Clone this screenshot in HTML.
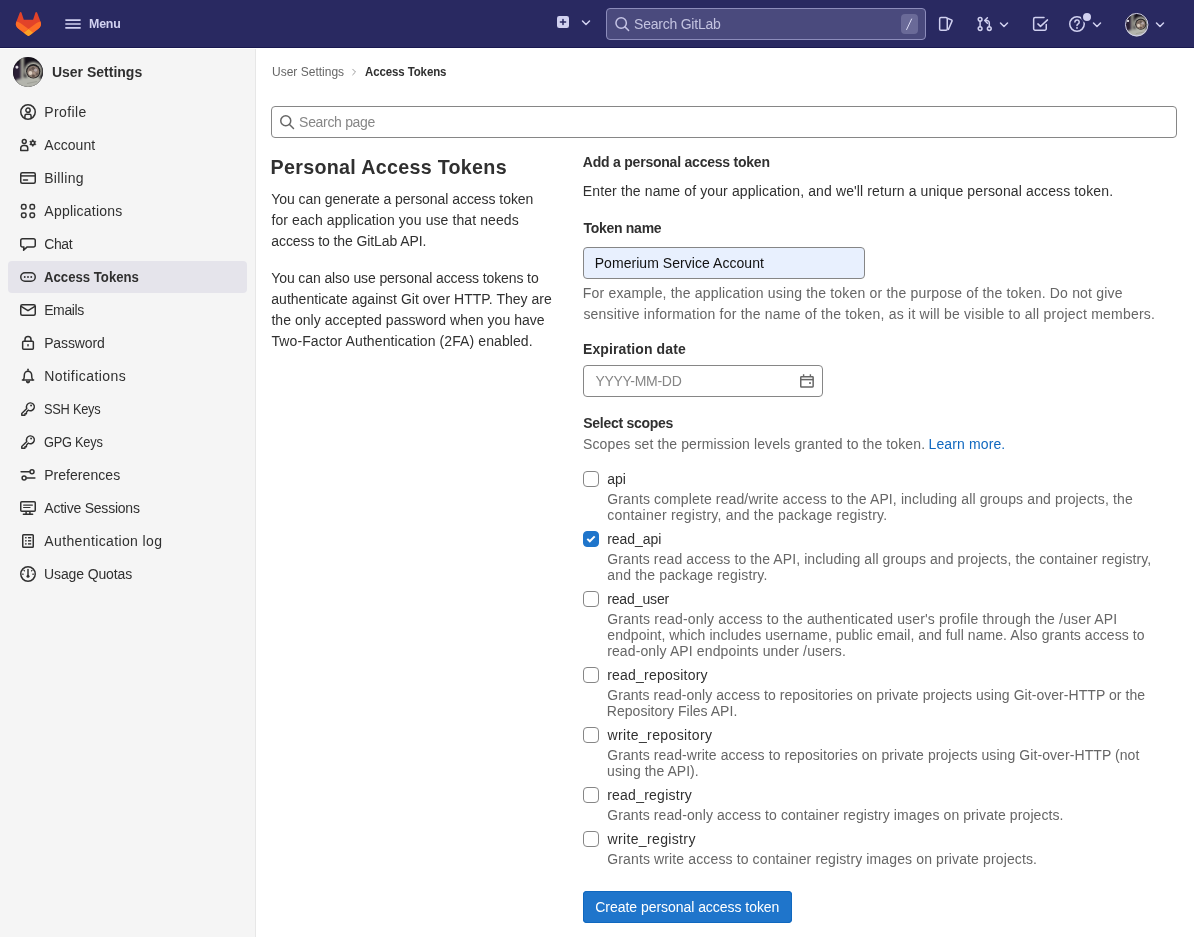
<!DOCTYPE html>
<html lang="en">
<head>
<meta charset="utf-8">
<title>Personal Access Tokens · User Settings · GitLab</title>
<style>
*{box-sizing:border-box;margin:0;padding:0}
html,body{width:1194px;height:937px;overflow:hidden;background:#fff}
body{font-family:"Liberation Sans",sans-serif;font-size:14px;color:#303030;position:relative;-webkit-font-smoothing:antialiased}
.abs{position:absolute;white-space:nowrap}
svg{display:block;overflow:visible}
#nav,#side,#main{will-change:transform}
/* ---------- navbar ---------- */
#nav{position:absolute;left:0;top:0;width:1194px;height:48px;background:#292961;border-bottom:1px solid #191950}
#nav .ic{position:absolute;color:#d1d1f0}
#nav .menu-t{left:89px;top:16px;font-size:12.4px;font-weight:bold;color:#d1d1f0;line-height:16px}
#srch{position:absolute;left:606px;top:8px;width:320px;height:32px;border:1px solid #8c8cbb;border-radius:4px;background:#4a4a7d}
#srch .ph{position:absolute;left:27px;top:7px;font-size:14px;line-height:16px;color:#c3c3e0}
#srch .kbd{position:absolute;left:293.6px;top:5px;width:17px;height:20px;border-radius:4px;background:#6a6a98;color:#d1d1f0;font-size:12px;line-height:20px;text-align:center;font-family:"Liberation Mono",monospace}
.avatar{position:absolute;border-radius:50%;overflow:hidden}
/* ---------- sidebar ---------- */
#side{position:absolute;left:0;top:48px;width:256px;height:889px;background:#fff}
#side .bg{position:absolute;left:0;top:1px;width:256px;height:888px;background:#f5f5f5;border-right:1px solid #e7e7e7}
#side .hd{position:absolute;left:52px;top:15px;font-size:14px;font-weight:bold;color:#303030;line-height:18px}
#side .it{position:absolute;left:8px;width:239px;height:32px;border-radius:4px}
#side .it.act{background:#e5e4eb}
#side .it .tx{position:absolute;left:36px;top:7px;font-size:14px;line-height:18px;color:#303030;white-space:nowrap}
#side .it.act .tx{font-weight:bold}
#side .it svg{position:absolute;left:12px;top:8px;width:16px;height:16px;color:#303030}
#t_s9,#t_s10{transform:scaleX(.915);transform-origin:0 50%}
#t_s5{transform:scaleX(.94);transform-origin:0 50%}
#t_bc2{transform:scaleX(.955);transform-origin:0 50%}
/* ---------- main ---------- */
#main{position:absolute;left:256px;top:48px;width:938px;height:889px;background:#fff}

#main{left:0;top:0;width:1194px;height:937px;background:none}
#main .t{position:absolute;white-space:nowrap;line-height:20px;font-size:14px;color:#303030}
#main .b{font-weight:bold}
#main .g{color:#666}
#main .h{color:#666;line-height:16px}
#main .bc{font-size:12px;line-height:16px}
#main .inp{position:absolute;height:32px;border:1px solid #868686;border-radius:4px;background:#fff}
#main .cb{position:absolute;left:583px;width:16px;height:16px;border:1px solid #868686;border-radius:4px;background:#fff}
#main .cb.on{background:#1f75cb;border-color:#1f75cb}
#main .btn{position:absolute;left:583px;top:891px;width:209px;height:32px;border-radius:4px;background:#1f75cb;box-shadow:inset 0 0 0 1px #1068bf}
#main .btn .t{color:#fff;left:12px;top:6px}
#main a{color:#1068bf;text-decoration:none}
/*TUNE*/
#t_menu{letter-spacing:-0.162px;margin-left:-0.03px}
#t_sg{letter-spacing:-0.235px;margin-left:0.11px}
#t_hd{letter-spacing:0.003px;margin-left:-0.10px}
#t_s0{letter-spacing:0.423px;margin-left:0.14px}
#t_s1{letter-spacing:0.032px;margin-left:0.33px}
#t_s2{letter-spacing:0.364px;margin-left:0.14px}
#t_s3{letter-spacing:0.222px;margin-left:0.33px}
#t_s4{letter-spacing:-0.428px;margin-left:0.33px}
#t_s5{letter-spacing:0.007px;margin-left:0.07px}
#t_s6{letter-spacing:-0.365px;margin-left:0.14px}
#t_s7{letter-spacing:-0.118px;margin-left:0.14px}
#t_s8{letter-spacing:0.448px;margin-left:0.14px}
#t_s9{letter-spacing:-0.267px;margin-left:0.45px}
#t_s10{letter-spacing:-0.269px;margin-left:0.45px}
#t_s11{letter-spacing:0.052px;margin-left:0.14px}
#t_s12{letter-spacing:-0.233px;margin-left:0.33px}
#t_s13{letter-spacing:0.371px;margin-left:0.33px}
#t_s14{letter-spacing:-0.132px;margin-left:0.12px}
#t_bc1{letter-spacing:0.007px;margin-left:0.01px}
#t_bc2{letter-spacing:-0.102px;margin-left:-0.28px}
#t_sp{letter-spacing:-0.318px;margin-left:0.12px}
#t_h1{letter-spacing:0.298px;margin-left:-0.43px}
#t_l0{letter-spacing:-0.053px;margin-left:0.31px}
#t_l1{letter-spacing:0.097px;margin-left:0.45px}
#t_l2{letter-spacing:-0.088px;margin-left:0.31px}
#t_l3{letter-spacing:-0.110px;margin-left:0.31px}
#t_l4{letter-spacing:0.020px;margin-left:0.31px}
#t_l5{letter-spacing:0.041px;margin-left:0.45px}
#t_l6{letter-spacing:0.092px;margin-left:0.45px}
#t_r0{letter-spacing:-0.224px;margin-left:-0.16px}
#t_r1{letter-spacing:0.121px;margin-left:-0.20px}
#t_r2{letter-spacing:-0.278px;margin-left:0.45px}
#t_r3{letter-spacing:0.047px;margin-left:-0.28px}
#t_r4{letter-spacing:0.179px;margin-left:-0.17px}
#t_r5{letter-spacing:0.213px;margin-left:0.39px}
#t_r6{letter-spacing:0.118px;margin-left:-0.05px}
#t_r7{letter-spacing:-0.283px;margin-left:0.40px}
#t_r8{letter-spacing:-0.276px;margin-left:0.24px}
#t_r9{letter-spacing:0.109px;margin-left:0.07px}
#t_r10{letter-spacing:0.117px;margin-left:-0.45px}
#t_c0{letter-spacing:-0.036px;margin-left:0.31px}
#t_c0h0{letter-spacing:0.124px;margin-left:0.27px}
#t_c0h1{letter-spacing:0.216px;margin-left:0.31px}
#t_c1{letter-spacing:-0.026px;margin-left:0.14px}
#t_c1h0{letter-spacing:0.100px;margin-left:0.27px}
#t_c1h1{letter-spacing:0.160px;margin-left:0.32px}
#t_c2{letter-spacing:-0.110px;margin-left:0.14px}
#t_c2h0{letter-spacing:0.164px;margin-left:0.27px}
#t_c2h1{letter-spacing:0.058px;margin-left:0.31px}
#t_c2h2{letter-spacing:0.124px;margin-left:0.16px}
#t_c3{letter-spacing:0.228px;margin-left:0.14px}
#t_c3h0{letter-spacing:0.050px;margin-left:0.27px}
#t_c3h1{letter-spacing:0.025px;margin-left:-0.17px}
#t_c4{letter-spacing:0.384px;margin-left:0.45px}
#t_c4h0{letter-spacing:0.076px;margin-left:0.27px}
#t_c4h1{letter-spacing:0.039px;margin-left:0.07px}
#t_c5{letter-spacing:0.247px;margin-left:0.14px}
#t_c5h0{letter-spacing:0.090px;margin-left:0.27px}
#t_c6{letter-spacing:0.363px;margin-left:0.45px}
#t_c6h0{letter-spacing:0.129px;margin-left:0.27px}
#t_btn{letter-spacing:-0.041px;margin-left:0.29px}
/*ENDTUNE*/
</style>
</head>
<body>
<!-- NAVBAR -->
<div id="nav">
  <svg class="ic" style="left:15.9px;top:11.6px" width="24.9" height="24.05" viewBox="94.2 97.4 191.6 185.2">
    <path d="M282.83,170.73l-.27-.69-26.14-68.22a6.81,6.81,0,0,0-2.69-3.24,7,7,0,0,0-8,.43,7,7,0,0,0-2.32,3.52l-17.65,54H154.29l-17.65-54A6.86,6.86,0,0,0,134.32,99a7,7,0,0,0-8-.43,6.87,6.87,0,0,0-2.69,3.24L97.44,170l-.26.69a48.54,48.54,0,0,0,16.1,56.1l.09.07.24.17,39.82,29.82,19.7,14.91,12,9.06a8.07,8.07,0,0,0,9.76,0l12-9.06,19.7-14.91,40.06-30,.1-.08A48.56,48.56,0,0,0,282.83,170.73Z" fill="#e24329"/>
    <path d="M282.83,170.73l-.27-.69a88.3,88.3,0,0,0-35.15,15.8L190,229.25c19.55,14.79,36.57,27.64,36.57,27.64l40.06-30,.1-.08A48.56,48.56,0,0,0,282.83,170.73Z" fill="#fc6d26"/>
    <path d="M153.43,256.89l19.7,14.91,12,9.06a8.07,8.07,0,0,0,9.76,0l12-9.06,19.7-14.91S209.55,244,190,229.25C170.45,244,153.43,256.89,153.43,256.89Z" fill="#fca326"/>
    <path d="M132.58,185.84A88.19,88.19,0,0,0,97.44,170l-.26.69a48.54,48.54,0,0,0,16.1,56.1l.09.07.24.17,39.82,29.82s17-12.85,36.57-27.64Z" fill="#fc6d26"/>
  </svg>
  <svg class="ic" style="left:65px;top:16px" width="16" height="16" viewBox="0 0 16 16" fill="none" stroke="currentColor" stroke-width="1.6" stroke-linecap="round"><path d="M.9 4.1h14.2M.9 8h14.2M.9 11.9h14.2"/></svg>
  <div class="abs menu-t" id="t_menu">Menu</div>

  <svg class="ic" style="left:557px;top:16px" width="12" height="12" viewBox="0 0 12 12"><rect x="0" y="0" width="12" height="12" rx="2.2" fill="currentColor"/><path d="M6 3.4v5.2M3.4 6h5.2" stroke="#292961" stroke-width="1.5" stroke-linecap="round"/></svg>
  <svg class="ic chev" style="left:581px;top:19.3px" width="10" height="8" viewBox="0 0 10 8" fill="none" stroke="currentColor" stroke-width="1.5" stroke-linecap="round" stroke-linejoin="round"><path d="M1.5 2 5 5.5 8.5 2"/></svg>
  <div id="srch">
    <svg class="ic" style="left:8px;top:7px;color:#c6c5e6" width="16" height="16" viewBox="0 0 16 16" fill="none" stroke="currentColor" stroke-width="1.5" stroke-linecap="round"><circle cx="6.15" cy="7" r="5.2"/><path d="M10 10.9 13.6 14.5"/></svg>
    <div class="abs ph" id="t_sg">Search GitLab</div>
    <div class="kbd"><svg width="17" height="20" viewBox="0 0 17 20" style="position:absolute;left:0;top:0"><path d="M5.6 15.6 10.6 5" stroke="#dcdcf5" stroke-width="1" stroke-linecap="round" fill="none"/></svg></div>
  </div>
  <!-- issues -->
  <svg class="ic" style="left:937px;top:16px" width="16" height="16" viewBox="0 0 16 16" fill="none" stroke="currentColor" stroke-width="1.5" stroke-linejoin="round"><rect x="2.65" y="1.6" width="7.6" height="12.6" rx="1.3"/><path d="M10.25 2.3 14.4 3.85a1 1 0 0 1 .6 1.3L11.2 14"/></svg>
  <!-- merge requests -->
  <svg class="ic" style="left:977px;top:16px" width="16" height="16" viewBox="0 0 16 16" fill="none" stroke="currentColor" stroke-width="1.5" stroke-linecap="round" stroke-linejoin="round"><circle cx="3.1" cy="3.3" r="1.9"/><circle cx="3.1" cy="12.6" r="1.9"/><circle cx="12.3" cy="12.6" r="1.9"/><path d="M3.1 5.2v5.5"/><path d="M12.3 10.7V6.9a2.4 2.4 0 0 0-2.4-2.4H8.3"/><path d="M10.4 1.8 7.7 4.5l2.7 2.7"/></svg>
  <svg class="ic chev" style="left:999px;top:20.9px" width="10" height="8" viewBox="0 0 10 8" fill="none" stroke="currentColor" stroke-width="1.5" stroke-linecap="round" stroke-linejoin="round"><path d="M1.5 2 5 5.5 8.5 2"/></svg>
  <!-- todos -->
  <svg class="ic" style="left:1032px;top:16px" width="16" height="16" viewBox="0 0 16 16" fill="none" stroke="currentColor" stroke-width="1.5" stroke-linecap="round" stroke-linejoin="round"><path d="M14.25 8.6v4.05a1.5 1.5 0 0 1-1.5 1.5H3.15a1.5 1.5 0 0 1-1.5-1.5V3.1a1.5 1.5 0 0 1 1.5-1.5H12"/><path d="M5.9 7.9 8.5 10.4 15.5 3.9"/></svg>
  <!-- help -->
  <svg class="ic" style="left:1069px;top:16px" width="16" height="16" viewBox="0 0 16 16" fill="none" stroke="currentColor" stroke-width="1.5" stroke-linecap="round"><circle cx="8" cy="8" r="7.25"/><path d="M5.9 6.1a2.15 2.15 0 1 1 3.3 1.8c-.7.45-1.2.85-1.2 1.6"/><circle cx="8" cy="11.9" r=".95" fill="currentColor" stroke="none"/></svg>
  <div class="ic" style="left:1081px;top:11px;width:12px;height:12px;border-radius:50%;background:#d1d1f0;border:2px solid #292961"></div>
  <svg class="ic chev" style="left:1092.2px;top:20.9px" width="10" height="8" viewBox="0 0 10 8" fill="none" stroke="currentColor" stroke-width="1.5" stroke-linecap="round" stroke-linejoin="round"><path d="M1.5 2 5 5.5 8.5 2"/></svg>
  <svg class="ic" style="left:1124.8px;top:12.8px" width="23.40" height="23.40" viewBox="0 0 23.40 23.40"><defs><clipPath id="nc"><circle cx="11.70" cy="11.70" r="11.70"/></clipPath><radialGradient id="ng"><stop offset="0" stop-color="#fff"/><stop offset=".4" stop-color="#fff" stop-opacity=".9"/><stop offset="1" stop-color="#d9cfe6" stop-opacity="0"/></radialGradient></defs><g clip-path="url(#nc)"><rect width="23.40" height="23.40" fill="#15111a"/><g style="filter:blur(0.85px)"><ellipse cx="3.28" cy="11.70" rx="3.74" ry="7.02" fill="#2a1f35"/><rect x="6.08" y="0.00" width="2.42" height="16.38" fill="#a9a99d"/><path d="M-1.56 21.06 L3.12 17.55 L9.36 15.83 L21.84 16.38 L25.74 24.96 L-1.56 24.96z" fill="#b4b5ad"/><ellipse cx="23.71" cy="10.92" rx="1.72" ry="5.07" fill="#110e13"/><circle cx="15.91" cy="10.69" r="6.86" fill="#b9b9ad"/></g><g opacity=".94"><circle cx="15.83" cy="11.15" r="5.62" fill="#1d1a1d"/><circle cx="15.76" cy="11.54" r="4.68" fill="#8a776d"/><circle cx="13.57" cy="12.40" r="1.56" fill="#dccfc2"/><circle cx="17.63" cy="10.22" r="1.33" fill="#b5a7ab"/><circle cx="16.22" cy="12.79" r="1.25" fill="#a89082"/><circle cx="15.91" cy="14.74" r="1.09" fill="#5c4b45"/><circle cx="15.60" cy="8.81" r="1.25" fill="#5f514c"/><circle cx="18.88" cy="13.34" r="1.01" fill="#6b5953"/><circle cx="13.26" cy="9.67" r="0.94" fill="#6d5d57"/><circle cx="3.04" cy="7.96" r="1.64" fill="url(#ng)"/><path d="M10.92 20.67 L18.72 19.11" stroke="#8f9088" stroke-width="0.94" opacity=".6"/></g></g><circle cx="11.70" cy="11.70" r="11.23" fill="none" stroke="#d2d2f2" stroke-width="1"/></svg>
  <svg class="ic chev" style="left:1155px;top:20.9px" width="10" height="8" viewBox="0 0 10 8" fill="none" stroke="currentColor" stroke-width="1.5" stroke-linecap="round" stroke-linejoin="round"><path d="M1.5 2 5 5.5 8.5 2"/></svg>
</div>

<!-- SIDEBAR -->
<div id="side">
  <div class="bg"></div>
  <svg style="position:absolute;left:13px;top:9px" width="30" height="30" viewBox="0 0 30 30"><defs><clipPath id="sc"><circle cx="15.00" cy="15.00" r="15.00"/></clipPath><radialGradient id="sg"><stop offset="0" stop-color="#fff"/><stop offset=".4" stop-color="#fff" stop-opacity=".9"/><stop offset="1" stop-color="#d9cfe6" stop-opacity="0"/></radialGradient></defs><g clip-path="url(#sc)"><rect width="30.00" height="30.00" fill="#15111a"/><g style="filter:blur(0.85px)"><ellipse cx="4.20" cy="15.00" rx="4.80" ry="9.00" fill="#2a1f35"/><rect x="7.80" y="0.00" width="3.10" height="21.00" fill="#a9a99d"/><path d="M-2.00 27.00 L4.00 22.50 L12.00 20.30 L28.00 21.00 L33.00 32.00 L-2.00 32.00z" fill="#b4b5ad"/><ellipse cx="30.40" cy="14.00" rx="2.20" ry="6.50" fill="#110e13"/><circle cx="20.40" cy="13.70" r="8.80" fill="#b9b9ad"/></g><g opacity=".94"><circle cx="20.30" cy="14.30" r="7.20" fill="#1d1a1d"/><circle cx="20.20" cy="14.80" r="6.00" fill="#8a776d"/><circle cx="17.40" cy="15.90" r="2.00" fill="#dccfc2"/><circle cx="22.60" cy="13.10" r="1.70" fill="#b5a7ab"/><circle cx="20.80" cy="16.40" r="1.60" fill="#a89082"/><circle cx="20.40" cy="18.90" r="1.40" fill="#5c4b45"/><circle cx="20.00" cy="11.30" r="1.60" fill="#5f514c"/><circle cx="24.20" cy="17.10" r="1.30" fill="#6b5953"/><circle cx="17.00" cy="12.40" r="1.20" fill="#6d5d57"/><circle cx="3.90" cy="10.20" r="2.10" fill="url(#sg)"/><path d="M14.00 26.50 L24.00 24.50" stroke="#8f9088" stroke-width="1.20" opacity=".6"/></g></g><circle cx="15" cy="15" r="14.6" fill="none" stroke="rgba(0,0,0,.08)" stroke-width=".8"/></svg>
  <div class="abs hd" id="t_hd">User Settings</div>
  <div class="it" style="top:48px"><svg viewBox="0 0 16 16" fill="none" stroke="currentColor" stroke-width="1.5" stroke-linecap="round" stroke-linejoin="round"><circle cx="8" cy="8" r="7.25"/><circle cx="8" cy="6.2" r="2.15"/><path d="M4.9 14.3v-2.4a1.7 1.7 0 0 1 1.7-1.7h2.8a1.7 1.7 0 0 1 1.7 1.7v2.4"/></svg><span class="tx" id="t_s0">Profile</span></div>
  <div class="it" style="top:81px"><svg viewBox="0 0 16 16" fill="none" stroke="currentColor" stroke-width="1.5" stroke-linecap="round" stroke-linejoin="round"><circle cx="4.25" cy="4.45" r="1.95"/><path d="M.75 13.45v-2.2a2.7 2.7 0 0 1 2.7-2.7h1.6a2.7 2.7 0 0 1 2.7 2.7v2.2z"/><path d="M12.37 2.78 L13.23 2.78 L13.70 3.88 L14.23 4.19 L15.42 4.04 L15.85 4.79 L15.13 5.74 L15.13 6.36 L15.85 7.31 L15.42 8.06 L14.23 7.91 L13.70 8.22 L13.23 9.32 L12.37 9.32 L11.90 8.22 L11.37 7.91 L10.18 8.06 L9.75 7.31 L10.47 6.36 L10.47 5.74 L9.75 4.79 L10.18 4.04 L11.37 4.19 L11.90 3.88z" fill="currentColor" stroke-width=".5"/><circle cx="12.8" cy="6.05" r="1.05" fill="#f5f5f5" stroke="none"/></svg><span class="tx" id="t_s1">Account</span></div>
  <div class="it" style="top:114px"><svg viewBox="0 0 16 16" fill="none" stroke="currentColor" stroke-width="1.5" stroke-linecap="round" stroke-linejoin="round"><rect x=".75" y="2.75" width="14.5" height="10.5" rx="1.5"/><path d="M1 5.9h14" stroke-linecap="butt"/><path d="M3.5 9.9h4"/></svg><span class="tx" id="t_s2">Billing</span></div>
  <div class="it" style="top:147px"><svg viewBox="0 0 16 16" fill="none" stroke="currentColor" stroke-width="1.5" stroke-linecap="round" stroke-linejoin="round"><rect x="1.5" y="1.6" width="4.5" height="4.5" rx="1.6"/><rect x="10" y="1.6" width="4.5" height="4.5" rx="1.6"/><rect x="1.5" y="9.9" width="4.5" height="4.5" rx="1.6"/><rect x="10" y="9.9" width="4.5" height="4.5" rx="1.6"/></svg><span class="tx" id="t_s3">Applications</span></div>
  <div class="it" style="top:180px"><svg viewBox="0 0 16 16" fill="none" stroke="currentColor" stroke-width="1.5" stroke-linecap="round" stroke-linejoin="round"><path d="M3.9 11.1H2.5A1.75 1.75 0 0 1 .75 9.35V4.5A1.75 1.75 0 0 1 2.5 2.75h11a1.75 1.75 0 0 1 1.75 1.75v4.85a1.75 1.75 0 0 1-1.75 1.75H6.9L3.6 14.3z"/></svg><span class="tx" id="t_s4">Chat</span></div>
  <div class="it act" style="top:213px"><svg viewBox="0 0 16 16" fill="none" stroke="currentColor" stroke-width="1.5" stroke-linecap="round" stroke-linejoin="round"><rect x=".75" y="3.75" width="14.5" height="8.5" rx="4.25"/><g fill="currentColor" stroke="none"><circle cx="4.75" cy="8" r=".95"/><circle cx="8" cy="8" r=".95"/><circle cx="11.25" cy="8" r=".95"/></g></svg><span class="tx" id="t_s5">Access Tokens</span></div>
  <div class="it" style="top:246px"><svg viewBox="0 0 16 16" fill="none" stroke="currentColor" stroke-width="1.5" stroke-linecap="round" stroke-linejoin="round"><rect x=".75" y="2.75" width="14.5" height="10.5" rx="1.5"/><path d="M1.5 4.6 8 8.7l6.5-4.1"/></svg><span class="tx" id="t_s6">Emails</span></div>
  <div class="it" style="top:279px"><svg viewBox="0 0 16 16" fill="none" stroke="currentColor" stroke-width="1.5" stroke-linecap="round" stroke-linejoin="round"><rect x="2.65" y="6.35" width="10.7" height="7.9" rx="1"/><path d="M5 6.3V4.6a3 3 0 0 1 6 0v1.7"/><rect x="7.3" y="9.1" width="1.4" height="2.3" fill="currentColor" stroke="none"/></svg><span class="tx" id="t_s7">Password</span></div>
  <div class="it" style="top:312px"><svg viewBox="0 0 16 16" fill="none" stroke="currentColor" stroke-width="1.5" stroke-linecap="round" stroke-linejoin="round"><path d="M8 1.2v1"/><path d="M3.4 11.7c1-1.4.95-2.9.95-4.9a3.65 3.65 0 0 1 7.3 0c0 2-.05 3.5.95 4.9"/><path d="M2.4 11.9h11.2"/><path d="M6.6 13.3a1.4 1.4 0 0 0 2.8 0" fill="currentColor"/></svg><span class="tx" id="t_s8">Notifications</span></div>
  <div class="it" style="top:345px"><svg viewBox="0 0 16 16" fill="none" stroke="currentColor" stroke-width="1.5" stroke-linecap="round" stroke-linejoin="round"><path d="M8.2 9.1A3.95 3.95 0 1 0 6.8 7.45L1.75 12.5v1.8h3.2v-1.5h1.5v-1.5z" stroke-width="1.4"/><circle cx="11.1" cy="4.5" r=".95" fill="currentColor" stroke="none"/></svg><span class="tx" id="t_s9">SSH Keys</span></div>
  <div class="it" style="top:378px"><svg viewBox="0 0 16 16" fill="none" stroke="currentColor" stroke-width="1.5" stroke-linecap="round" stroke-linejoin="round"><path d="M8.2 9.1A3.95 3.95 0 1 0 6.8 7.45L1.75 12.5v1.8h3.2v-1.5h1.5v-1.5z" stroke-width="1.4"/><circle cx="11.1" cy="4.5" r=".95" fill="currentColor" stroke="none"/></svg><span class="tx" id="t_s10">GPG Keys</span></div>
  <div class="it" style="top:411px"><svg viewBox="0 0 16 16" fill="none" stroke="currentColor" stroke-width="1.5" stroke-linecap="round" stroke-linejoin="round"><path d="M1.1 4.7h8.2"/><circle cx="12" cy="4.7" r="2"/><circle cx="4.1" cy="10.9" r="2"/><path d="M6.8 10.9h8.1"/></svg><span class="tx" id="t_s11">Preferences</span></div>
  <div class="it" style="top:444px"><svg viewBox="0 0 16 16" fill="none" stroke="currentColor" stroke-width="1.5" stroke-linecap="round" stroke-linejoin="round"><rect x=".75" y="1.75" width="14.5" height="9.5" rx="1"/><path d="M3.4 14.35h9.2"/><path d="M6.1 12v2M9.9 12v2" stroke-linecap="butt"/><path d="M3.6 5.1h8.8M3.6 7.5h6.4" stroke-width="1.2"/></svg><span class="tx" id="t_s12">Active Sessions</span></div>
  <div class="it" style="top:477px"><svg viewBox="0 0 16 16" fill="none" stroke="currentColor" stroke-width="1.5" stroke-linecap="round" stroke-linejoin="round"><rect x="2.75" y="1.75" width="10.5" height="12.5" rx=".8"/><g fill="currentColor" stroke="none"><rect x="5.1" y="4" width="1.5" height="1.4"/><rect x="8" y="4" width="3.2" height="1.4"/><rect x="5.1" y="7.1" width="1.5" height="1.4"/><rect x="8" y="7.1" width="3.2" height="1.4"/><rect x="5.1" y="10.2" width="1.5" height="1.4"/><rect x="8" y="10.2" width="3.2" height="1.4"/></g></svg><span class="tx" id="t_s13">Authentication log</span></div>
  <div class="it" style="top:510px"><svg viewBox="0 0 16 16" fill="none" stroke="currentColor" stroke-width="1.5" stroke-linecap="round" stroke-linejoin="round"><circle cx="8" cy="8" r="7.25"/><path d="M8 3.6v5.8"/><circle cx="8" cy="10.2" r="1.5" fill="currentColor" stroke="none"/><path d="M2.6 8.2h.6M12.8 8.2h.6M4 4.3l.5.5M12 4.3l-.5.5" stroke-width="1.2"/></svg><span class="tx" id="t_s14">Usage Quotas</span></div>
</div>

<!-- MAIN -->
<div id="main">
  <div class="t bc" id="t_bc1" style="left:272px;top:64px;color:#666">User Settings</div>
  <svg style="position:absolute;left:351.3px;top:68px;color:#9a9a9a" width="6" height="8" viewBox="0 0 6 8" fill="none" stroke="currentColor" stroke-width="1" stroke-linecap="round" stroke-linejoin="round"><path d="M1.7 1.2 4.5 4 1.7 6.8"/></svg>
  <div class="t bc b" id="t_bc2" style="left:365px;top:64px">Access Tokens</div>
  <div class="inp" style="left:271px;top:106px;width:906px"></div>
  <svg style="position:absolute;left:279px;top:114px;color:#666" width="16" height="16" viewBox="0 0 16 16" fill="none" stroke="currentColor" stroke-width="1.5" stroke-linecap="round"><circle cx="6.75" cy="6.75" r="5"/><path d="M10.5 10.5 14.5 14.5"/></svg>
  <div class="t " id="t_sp" style="left:299px;top:112px;color:#868686">Search page</div>
  <div class="t b" id="t_h1" style="left:271px;top:156.5px;font-size:19.7px">Personal Access Tokens</div>
  <div class="t " id="t_l0" style="left:271px;top:188.5px">You can generate a personal access token</div>
  <div class="t " id="t_l1" style="left:271px;top:209.5px">for each application you use that needs</div>
  <div class="t " id="t_l2" style="left:271px;top:230.5px">access to the GitLab API.</div>
  <div class="t " id="t_l3" style="left:271px;top:267.5px">You can also use personal access tokens to</div>
  <div class="t " id="t_l4" style="left:271px;top:288.5px">authenticate against Git over HTTP. They are</div>
  <div class="t " id="t_l5" style="left:271px;top:309.5px">the only accepted password when you have</div>
  <div class="t " id="t_l6" style="left:271px;top:330.5px">Two-Factor Authentication (2FA) enabled.</div>
  <div class="t b" id="t_r0" style="left:583px;top:151.5px">Add a personal access token</div>
  <div class="t " id="t_r1" style="left:583px;top:180.5px">Enter the name of your application, and we'll return a unique personal access token.</div>
  <div class="t b" id="t_r2" style="left:583px;top:217.5px">Token name</div>
  <div class="inp" style="left:583px;top:247px;width:282px;background:#e8f0fe"></div>
  <div class="t " id="t_r3" style="left:595px;top:253px;color:#111">Pomerium Service Account</div>
  <div class="t g" id="t_r4" style="left:583px;top:282.5px">For example, the application using the token or the purpose of the token. Do not give</div>
  <div class="t g" id="t_r5" style="left:583px;top:303.5px">sensitive information for the name of the token, as it will be visible to all project members.</div>
  <div class="t b" id="t_r6" style="left:583px;top:338.5px">Expiration date</div>
  <div class="inp" style="left:583px;top:365px;width:240px"></div>
  <div class="t " id="t_r7" style="left:595px;top:371px;color:#868686">YYYY-MM-DD</div>
  <svg style="position:absolute;left:799px;top:373px;color:#666" width="16" height="16" viewBox="0 0 16 16" fill="none" stroke="currentColor" stroke-width="1.5" stroke-linecap="butt" stroke-linejoin="round"><rect x="1.75" y="3.85" width="12.4" height="10.2" rx=".7"/><path d="M1.75 6.6h12.4"/><path d="M4.6 1.2v2.6M11.4 1.2v2.6" stroke-width="1.4"/><rect x="10.1" y="9.1" width="1.8" height="1.8" rx=".4" fill="currentColor" stroke="none"/></svg>
  <div class="t b" id="t_r8" style="left:583px;top:412.5px">Select scopes</div>
  <div class="t g" id="t_r9" style="left:583px;top:433.5px">Scopes set the permission levels granted to the token.</div>
  <div class="t " id="t_r10" style="left:929px;top:433.5px"><a>Learn more.</a></div>
  <div class="cb" style="top:471px"></div>
  <div class="t " id="t_c0" style="left:607px;top:469px">api</div>
  <div class="t h" id="t_c0h0" style="left:607px;top:491px">Grants complete read/write access to the API, including all groups and projects, the</div>
  <div class="t h" id="t_c0h1" style="left:607px;top:507px">container registry, and the package registry.</div>
  <div class="cb on" style="top:531px"><svg style="position:absolute;left:2px;top:3px" width="10" height="8" viewBox="0 0 10 8" fill="none" stroke="#fff" stroke-width="2" stroke-linecap="butt" stroke-linejoin="miter"><path d="M1.3 3.9 3.8 6.3 8.7 1.4"/></svg></div>
  <div class="t " id="t_c1" style="left:607px;top:529px">read_api</div>
  <div class="t h" id="t_c1h0" style="left:607px;top:551px">Grants read access to the API, including all groups and projects, the container registry,</div>
  <div class="t h" id="t_c1h1" style="left:607px;top:567px">and the package registry.</div>
  <div class="cb" style="top:591px"></div>
  <div class="t " id="t_c2" style="left:607px;top:589px">read_user</div>
  <div class="t h" id="t_c2h0" style="left:607px;top:611px">Grants read-only access to the authenticated user's profile through the /user API</div>
  <div class="t h" id="t_c2h1" style="left:607px;top:627px">endpoint, which includes username, public email, and full name. Also grants access to</div>
  <div class="t h" id="t_c2h2" style="left:607px;top:643px">read-only API endpoints under /users.</div>
  <div class="cb" style="top:667px"></div>
  <div class="t " id="t_c3" style="left:607px;top:665px">read_repository</div>
  <div class="t h" id="t_c3h0" style="left:607px;top:687px">Grants read-only access to repositories on private projects using Git-over-HTTP or the</div>
  <div class="t h" id="t_c3h1" style="left:607px;top:703px">Repository Files API.</div>
  <div class="cb" style="top:727px"></div>
  <div class="t " id="t_c4" style="left:607px;top:725px">write_repository</div>
  <div class="t h" id="t_c4h0" style="left:607px;top:747px">Grants read-write access to repositories on private projects using Git-over-HTTP (not</div>
  <div class="t h" id="t_c4h1" style="left:607px;top:763px">using the API).</div>
  <div class="cb" style="top:787px"></div>
  <div class="t " id="t_c5" style="left:607px;top:785px">read_registry</div>
  <div class="t h" id="t_c5h0" style="left:607px;top:807px">Grants read-only access to container registry images on private projects.</div>
  <div class="cb" style="top:831px"></div>
  <div class="t " id="t_c6" style="left:607px;top:829px">write_registry</div>
  <div class="t h" id="t_c6h0" style="left:607px;top:851px">Grants write access to container registry images on private projects.</div>
  <div class="btn"><div class="t" id="t_btn">Create personal access token</div></div>
</div>
</body>
</html>
